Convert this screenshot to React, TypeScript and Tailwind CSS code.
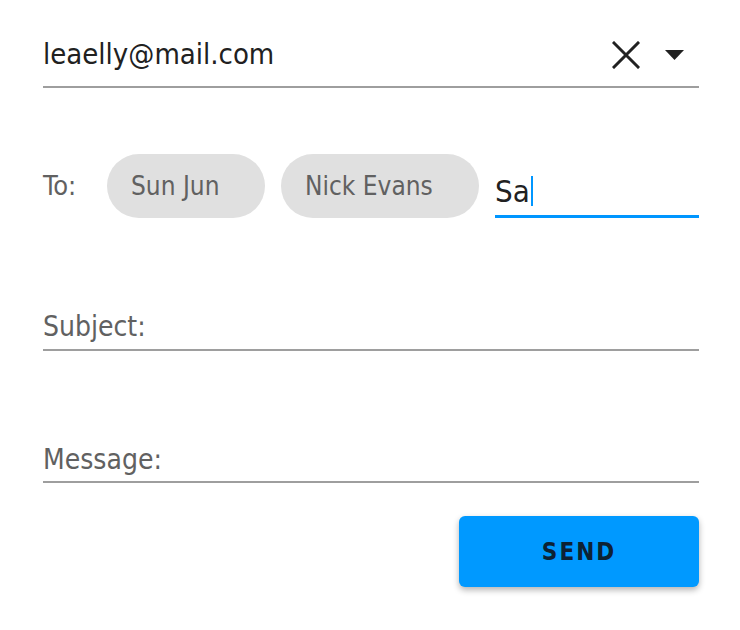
import React from "react";

const font = "font-['Liberation_Sans_Narrow','DejaVu_Sans_Condensed',sans-serif]";

function CloseIcon() {
  return (
    <svg width="28" height="28" viewBox="0 0 28 28" fill="none">
      <path d="M2 2L26 26M26 2L2 26" stroke="#212121" strokeWidth="3" strokeLinecap="square" />
    </svg>
  );
}

function Caret() {
  return (
    <svg width="19" height="10" viewBox="0 0 19 10">
      <path d="M0 0H19L9.5 10Z" fill="#212121" />
    </svg>
  );
}

function Chip({ label, width }: { label: string; width: string }) {
  return (
    <div className={`h-16 ${width} pl-6 rounded-full bg-[#e0e0e0] flex items-center text-[26px] text-[#616161]`}>
      {label}
    </div>
  );
}

export default function App() {
  return (
    <main className={`w-[740px] h-[630px] bg-white pl-[43px] pr-[41px] pt-[30px] ${font}`}>
      {/* account */}
      <div className="h-[58px] pb-[6px] flex items-center border-b-2 border-[#9e9e9e]">
        <span className="flex-1 text-[29px] text-[#212121]">leaelly@mail.com</span>
        <div className="flex items-center gap-[25px] pr-[15px]">
          <CloseIcon />
          <Caret />
        </div>
      </div>

      {/* recipients */}
      <div className="mt-[66px] h-16 flex items-center gap-4">
        <span className="w-[48px] text-[27px] text-[#616161]">To:</span>
        <Chip label="Sun Jun" width="w-[158px]" />
        <Chip label="Nick Evans" width="w-[198px]" />
        <div className="flex-1 self-stretch flex items-end border-b-[3px] border-[#0096ff] pb-[6px]">
          <span className="text-[31px] leading-[36px] text-[#212121]">Sa</span>
          <span className="w-[2px] h-[30px] mb-[3px] ml-px bg-[#0096ff]" />
        </div>
      </div>

      {/* subject */}
      <div className="mt-[92px] h-[41px] pb-1 flex items-end border-b-2 border-[#9e9e9e]">
        <span className="text-[28px] leading-[36px] text-[#616161]">Subject:</span>
      </div>

      {/* message */}
      <div className="mt-[92px] h-[40px] pb-[3px] flex items-end border-b-2 border-[#9e9e9e]">
        <span className="text-[28px] leading-[36px] text-[#616161]">Message:</span>
      </div>

      <div className="mt-[33px] flex justify-end">
        <button className="w-[240px] h-[71px] rounded-md bg-[#0099ff] shadow-[0_3px_6px_rgba(0,0,0,0.3)] text-[24px] font-semibold tracking-[2px] text-[#0d2233]">
          SEND
        </button>
      </div>
    </main>
  );
}
